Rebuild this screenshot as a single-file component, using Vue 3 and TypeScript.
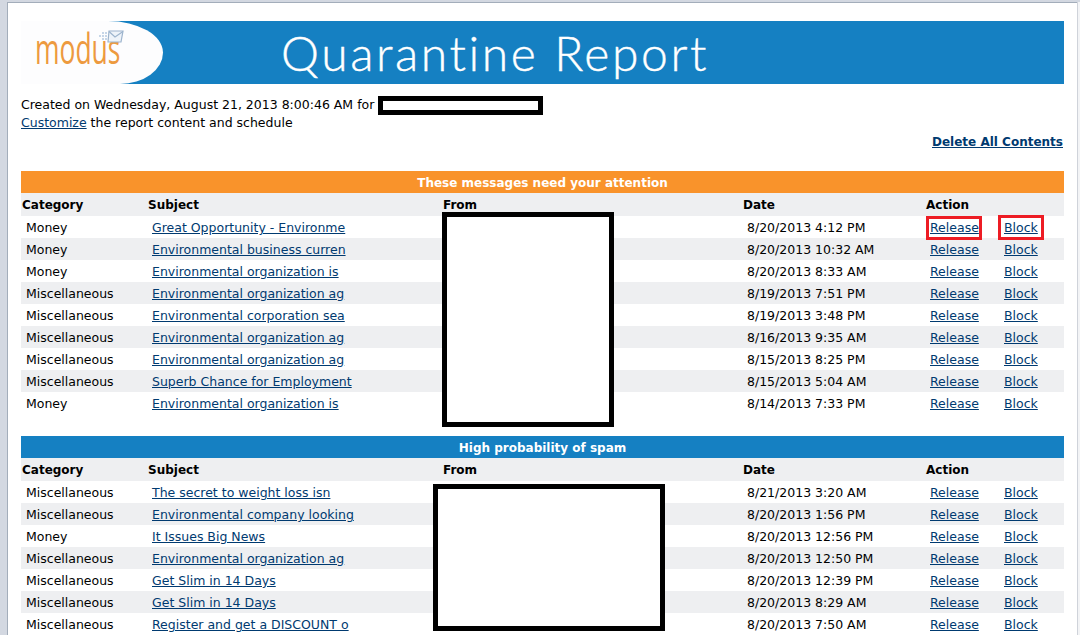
<script setup lang="ts">
interface Row { cat: string; subject: string; date: string; mark?: boolean }
interface Section { title: string; tone: string; rows: Row[]; redactClass: string }
const sections: Section[] = [
  {
    title: 'These messages need your attention', tone: 'orange', redactClass: 'redact-a',
    rows: [
      { cat: 'Money', subject: 'Great Opportunity - Environme', date: '8/20/2013 4:12 PM', mark: true },
      { cat: 'Money', subject: 'Environmental business curren', date: '8/20/2013 10:32 AM' },
      { cat: 'Money', subject: 'Environmental organization is', date: '8/20/2013 8:33 AM' },
      { cat: 'Miscellaneous', subject: 'Environmental organization ag', date: '8/19/2013 7:51 PM' },
      { cat: 'Miscellaneous', subject: 'Environmental corporation sea', date: '8/19/2013 3:48 PM' },
      { cat: 'Miscellaneous', subject: 'Environmental organization ag', date: '8/16/2013 9:35 AM' },
      { cat: 'Miscellaneous', subject: 'Environmental organization ag', date: '8/15/2013 8:25 PM' },
      { cat: 'Miscellaneous', subject: 'Superb Chance for Employment', date: '8/15/2013 5:04 AM' },
      { cat: 'Money', subject: 'Environmental organization is', date: '8/14/2013 7:33 PM' },
    ],
  },
  {
    title: 'High probability of spam', tone: 'blue', redactClass: 'redact-b',
    rows: [
      { cat: 'Miscellaneous', subject: 'The secret to weight loss isn', date: '8/21/2013 3:20 AM' },
      { cat: 'Miscellaneous', subject: 'Environmental company looking', date: '8/20/2013 1:56 PM' },
      { cat: 'Money', subject: 'It Issues Big News', date: '8/20/2013 12:56 PM' },
      { cat: 'Miscellaneous', subject: 'Environmental organization ag', date: '8/20/2013 12:50 PM' },
      { cat: 'Miscellaneous', subject: 'Get Slim in 14 Days', date: '8/20/2013 12:39 PM' },
      { cat: 'Miscellaneous', subject: 'Get Slim in 14 Days', date: '8/20/2013 8:29 AM' },
      { cat: 'Miscellaneous', subject: 'Register and get a DISCOUNT o', date: '8/20/2013 7:50 AM' },
    ],
  },
]
</script>

<template>
  <div class="window">
    <div class="page">
      <header class="banner">
        <div class="logo">
          <span class="logo-text">modus</span>
          <svg class="logo-mail" width="26" height="14" viewBox="0 0 26 14">
            <g fill="#c6d6e8">
              <rect x="0" y="5" width="2" height="2" /><rect x="3" y="2" width="2" height="2" />
              <rect x="3" y="5" width="2" height="2" /><rect x="3" y="8" width="2" height="2" />
              <rect x="6" y="2" width="2" height="2" /><rect x="6" y="5" width="2" height="2" />
              <rect x="6" y="8" width="2" height="2" />
            </g>
            <path d="M10 1 L24 1 L22 12 L9 12 Z" fill="#eef3f9" stroke="#9db4cd" stroke-width="1.2" />
            <path d="M10 1.5 L16 7 L24 1.5" fill="none" stroke="#9db4cd" stroke-width="1.2" />
          </svg>
        </div>
        <h1 class="title">Quarantine Report</h1>
      </header>

      <p class="meta meta-first">Created on Wednesday, August 21, 2013 8:00:46 AM for <span class="redact-mail"></span></p>
      <p class="meta"><a href="#">Customize</a> the report content and schedule</p>
      <div class="delete"><a href="#">Delete All Contents</a></div>

      <section v-for="s in sections" :key="s.title" class="section">
        <div class="bar" :class="s.tone">{{ s.title }}</div>
        <div class="row head">
          <span>Category</span><span>Subject</span><span>From</span><span>Date</span><span>Action</span>
        </div>
        <div v-for="(r, i) in s.rows" :key="i" class="row item">
          <span>{{ r.cat }}</span>
          <span><a href="#">{{ r.subject }}</a></span>
          <span></span>
          <span>{{ r.date }}</span>
          <span class="actions">
            <span class="slot"><a href="#" class="release" :class="{ mark: r.mark }">Release</a></span>
            <span class="slot"><a href="#" class="block" :class="{ mark: r.mark }">Block</a></span>
          </span>
        </div>
        <div class="redact" :class="s.redactClass"></div>
      </section>
    </div>
    <div class="edge"></div>
  </div>
</template>

<style>
html, body { margin: 0; background: #fff; overflow: hidden; }
</style>

<style scoped>
.window {
  width: 1080px;
  height: 635px;
  box-sizing: border-box;
  overflow: hidden;
  background: #fff;
  border-top: 2px solid #d3d8e1;
  border-left: 7px solid #d3d8e1;
  font: 12.5px/22px "DejaVu Sans", Verdana, sans-serif;
  color: #000;
  position: relative;
}
.window::before {
  content: "";
  position: absolute;
  inset: 0;
  border-top: 1px solid #a3adba;
  border-left: 1px solid #a3adba;
  pointer-events: none;
}
.edge {
  position: absolute;
  top: 0;
  right: 0;
  bottom: 0;
  width: 2px;
  background: #f3f4f6;
  border-left: 1px solid #cfd3da;
}
.page {
  width: 1043px;
  margin-left: 14px;
  padding-top: 19px;
}
a { color: #003a70; text-decoration: underline; }
.banner {
  height: 63px;
  background: #1580c2;
  display: flex;
  align-items: center;
}
.logo {
  position: relative;
  width: 142px;
  height: 63px;
  flex: none;
  background: #fdfdfe;
  border-radius: 0 55px 43px 0 / 0 50% 50% 0;
}
.logo-text {
  position: absolute;
  left: 14px;
  top: 2px;
  font: 500 42px/50px "Open Sans", sans-serif;
  color: #ed9a3f;
  white-space: nowrap;
  transform: scaleX(0.63);
  transform-origin: left center;
}
.logo-mail { position: absolute; left: 78px; top: 9px; }
.title {
  margin: 0 0 0 118px;
  font: 300 48px/63px Lato, sans-serif;
  letter-spacing: 2.6px;
  color: #fff;
  white-space: nowrap;
  -webkit-text-stroke: 0.4px #fff;
}
.meta { margin: 0; height: 18px; line-height: 18px; }
.meta-first { margin-top: 12px; }
.redact-mail {
  display: inline-block;
  width: 165px;
  height: 19px;
  box-sizing: border-box;
  border: 5px solid #000;
  background: #fff;
  vertical-align: top;
  margin-bottom: -1px;
}
.delete { height: 40px; margin-top: -1px; padding-right: 1px; text-align: right; font-weight: 700; font-size: 12px; }
.section { position: relative; margin-bottom: 22px; }
.bar {
  height: 22px;
  line-height: 24px;
  text-align: center;
  color: #fff;
  font-weight: 700;
  font-size: 12px;
}
.orange { background: #f9932b; }
.blue { background: #1580c2; }
.row {
  display: grid;
  grid-template-columns: 126px 295px 300px 183px 139px;
  height: 22px;
  line-height: 24px;
  white-space: nowrap;
}
.item:nth-child(even) { background: #eeeff1; }
.head { height: 23px; background: #eeeff1; font-weight: 700; font-size: 12px; }
.head > span { padding-left: 1px; }
.item > span { padding-left: 5px; }
.item > .actions { display: flex; }
.slot { width: 74px; flex: none; }
.item > .actions > .slot { padding: 0; }
.release, .block { position: relative; display: inline-block; height: 22px; }
.release.mark::after {
  content: "";
  position: absolute;
  inset: 0 -3px -2px -4px;
  border: 3px solid #ed1c24;
}
.block.mark::after {
  content: "";
  position: absolute;
  inset: -1px -6px -2px -6px;
  border: 3px solid #ed1c24;
}
.redact { position: absolute; box-sizing: border-box; border: 5px solid #000; background: #fff; }
.redact-a { left: 421px; top: 41px; width: 172px; height: 215px; }
.redact-b { left: 412px; top: 48px; width: 232px; height: 147px; }
</style>
